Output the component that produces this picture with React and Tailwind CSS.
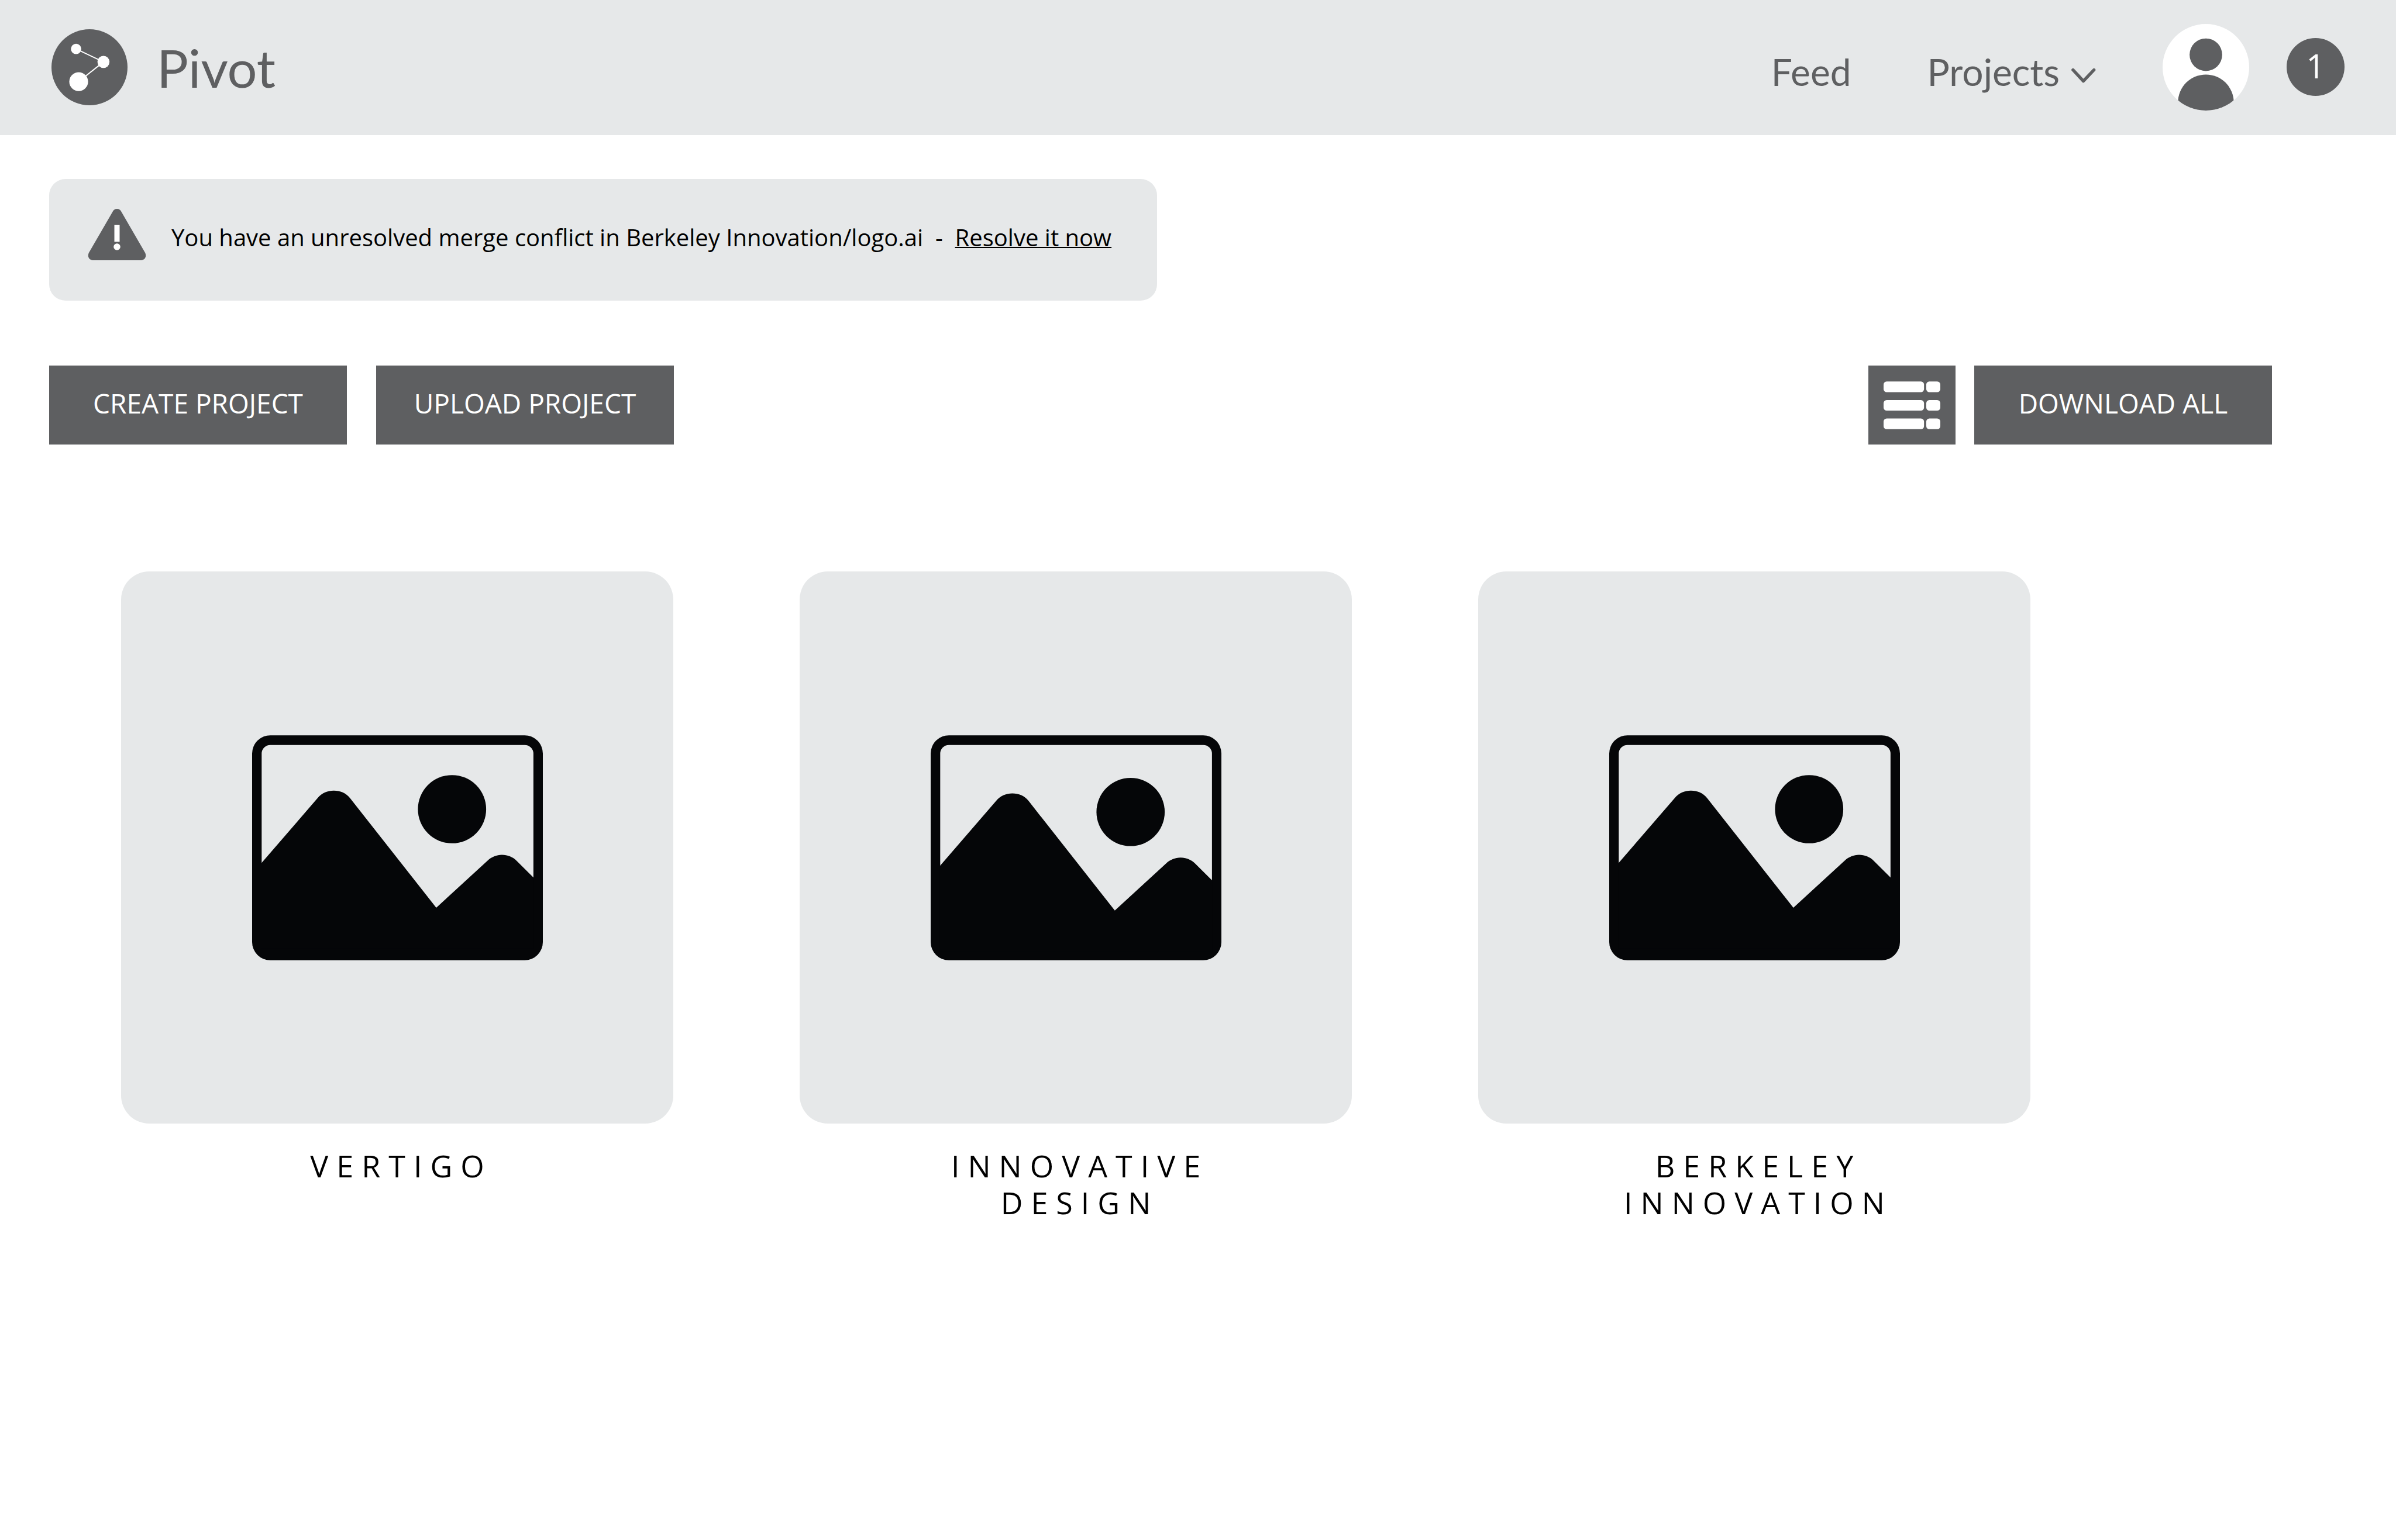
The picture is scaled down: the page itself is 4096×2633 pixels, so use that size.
const projects = [
  { name: 'Vertigo', horizon: 0 },
  { name: 'Innovative Design', horizon: 5 },
  { name: 'Berkeley Innovation', horizon: 0 },
];

function Logo() {
  return (
    <svg viewBox="0 0 135 135" className="size-[130px]" aria-hidden="true">
      <circle cx="67.5" cy="67.5" r="67.5" fill="#5e5f61" />
      <path d="M43.7 35 L92.3 58 L48.3 93" fill="none" stroke="#fff" strokeWidth="2" />
      <circle cx="43.7" cy="35" r="9.2" fill="#fff" />
      <circle cx="92.3" cy="58" r="10.7" fill="#fff" />
      <circle cx="48.3" cy="93" r="16.7" fill="#fff" />
    </svg>
  );
}

function Avatar() {
  return (
    <svg viewBox="0 0 154 154" className="size-[148px]" aria-hidden="true">
      <defs>
        <clipPath id="avatar-clip">
          <circle cx="77" cy="77" r="77" />
        </clipPath>
      </defs>
      <circle cx="77" cy="77" r="77" fill="#fff" />
      <circle cx="77" cy="54.7" r="29" fill="#5e5f61" />
      <circle cx="77" cy="139.5" r="49.6" fill="#5e5f61" clipPath="url(#avatar-clip)" />
    </svg>
  );
}

function Chevron() {
  return (
    <svg viewBox="0 0 44 28" className="mt-[14px] h-[27px] w-[42px]" aria-hidden="true">
      <path
        d="M3 3.500 L21.500 23.500 L40.500 3.500"
        fill="none"
        stroke="#5e5f61"
        strokeWidth="5.6"
        strokeLinecap="round"
        strokeLinejoin="round"
      />
    </svg>
  );
}

function Warning() {
  return (
    <svg viewBox="0 0 104 92" className="h-[88px] w-[100px] shrink-0" aria-hidden="true">
      <path
        d="M52 0 C55 0 57.500 1.500 59 4 L102.500 79 C105.500 86 101 92 95 92 H9 C3 92 -1.500 86 1.500 79 L45 4 C46.500 1.500 49 0 52 0 Z"
        fill="#5e5f61"
      />
      <rect x="47.300" y="29" width="9.400" height="30" fill="#fff" />
      <circle cx="52" cy="68" r="6" fill="#fff" />
    </svg>
  );
}

function ListIcon() {
  return (
    <svg viewBox="0 0 101 85" className="h-[82px] w-[97px]" fill="#fff" aria-hidden="true">
      {[0, 33, 66].map((y) => (
        <g key={y}>
          <rect x="0" y={y} width="72" height="19" rx="5.500" />
          <rect x="76" y={y} width="25" height="19" rx="5.500" />
        </g>
      ))}
    </svg>
  );
}

function Picture({ horizon }) {
  return (
    <svg viewBox="0 0 518 401" className="h-[385px] w-[497px]" fill="#050608" aria-hidden="true">
      <path
        fillRule="evenodd"
        d="M32.500 0 H485.500 A32.500 32.500 0 0 1 518 32.500 V368.500 A32.500 32.500 0 0 1 485.500 401 H32.500 A32.500 32.500 0 0 1 0 368.500 V32.500 A32.500 32.500 0 0 1 32.500 0 Z M32.500 17.200 A15.500 15.500 0 0 0 17 32.700 V350 H501.200 V32.700 A15.500 15.500 0 0 0 485.700 17.200 Z"
      />
      <g transform={`translate(0 ${horizon})`}>
        <path d="M16.500 227.800 L116.900 111.700 C124 103 135 98.700 145.400 98.700 C157 98.700 167 103 174.200 111.700 L328.100 307.300 L419.500 223.300 C427 216.500 436 213 445 213 C455 213 464 216.500 471 223.300 L501.700 253.800 V380 H16.500 Z" />
        <circle cx="356.200" cy="131.700" r="60.800" />
      </g>
    </svg>
  );
}

function ActionButton({ children }) {
  return (
    <button
      type="button"
      className="h-[135px] w-[509px] bg-[#5e5f61] pb-[6px] text-[46px] text-white uppercase"
    >
      {children}
    </button>
  );
}

export default function App() {
  return (
    <div className="min-h-screen bg-white font-['Open_Sans',sans-serif] text-black">
      <header className="flex h-[231px] items-center justify-between bg-[#e6e8e9] px-[88px] pb-[2px] font-['Lato',sans-serif] text-[#5e5f61]">
        <a href="#home" className="flex items-center gap-[50px]">
          <Logo />
          <span className="text-[90px] leading-none">Pivot</span>
        </a>
        <div className="flex items-center">
          <nav className="mr-[114px] flex items-center gap-[130px] pt-[16px] text-[64px] leading-none">
            <a href="#feed">Feed</a>
            <button type="button" className="flex items-center gap-[20px]">
              Projects
              <Chevron />
            </button>
          </nav>
          <div className="flex items-center gap-[64px]">
            <button type="button" aria-label="Account">
              <Avatar />
            </button>
            <button
              type="button"
              aria-label="Notifications"
              className="size-[99px] rounded-full bg-[#5e5f61] pb-[6px] font-['Open_Sans',sans-serif] text-[56px] leading-none text-white"
            >
              1
            </button>
          </div>
        </div>
      </header>

      <main className="pt-[75px] pr-[212px] pl-[84px]">
        <div
          role="alert"
          className="flex h-[208px] w-fit items-center gap-[43px] rounded-[28px] bg-[#e6e8e9] pr-[78px] pb-[19px] pl-[66px]"
        >
          <Warning />
          <p className="pt-[11px] text-[40px] whitespace-pre">
            {'You have an unresolved merge conflict in Berkeley Innovation/logo.ai  -  '}
            <a href="#resolve" className="underline decoration-2">
              Resolve it now
            </a>
          </p>
        </div>

        <div className="mt-[111px] flex items-center justify-between">
          <div className="flex gap-[50px]">
            <ActionButton>Create project</ActionButton>
            <ActionButton>Upload project</ActionButton>
          </div>
          <div className="flex gap-[32px]">
            <button
              type="button"
              aria-label="List view"
              className="flex h-[135px] w-[149px] items-center justify-center bg-[#5e5f61]"
            >
              <ListIcon />
            </button>
            <ActionButton>Download all</ActionButton>
          </div>
        </div>

        <ul className="mt-[217px] ml-[123px] flex flex-wrap gap-[216px]">
          {projects.map((project) => (
            <li key={project.name}>
              <a href="#project" className="flex w-[944px] flex-col items-center">
                <div className="flex h-[944px] w-full items-center justify-center rounded-[48px] bg-[#e6e8e9]">
                  <Picture horizon={project.horizon} />
                </div>
                <h2 className="mt-[40px] w-[600px] pl-[14px] text-center text-[52px] leading-[63px] tracking-[14px] uppercase">
                  {project.name}
                </h2>
              </a>
            </li>
          ))}
        </ul>
      </main>
    </div>
  );
}
